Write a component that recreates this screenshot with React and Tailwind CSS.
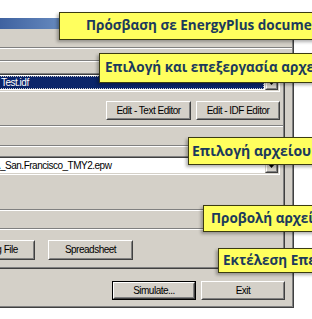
import React from "react";

const ui = "font-['Liberation_Sans',Arial,sans-serif] text-[10px] tracking-[-0.5px] text-black leading-none whitespace-nowrap";

function Btn({ children, className = "", def = false }) {
  const body = (
    <div className="h-full border border-t-white border-l-white border-r-[#404040] border-b-[#404040]">
      <div className={"h-full flex items-center justify-center border border-t-[#d4d0c8] border-l-[#d4d0c8] border-r-[#808080] border-b-[#808080] " + ui}>
        {children}
      </div>
    </div>
  );
  if (def) {
    return <div className={"border border-black " + className}>{body}</div>;
  }
  return <div className={className}>{body}</div>;
}

function Arrow() {
  return (
    <svg width="7" height="4" viewBox="0 0 7 4">
      <path d="M0 0h7L3.5 4z" fill="#000" />
    </svg>
  );
}

function Combo({ children, selected = false, textClass = "" }) {
  return (
    <div className="ml-[-4px] mr-[3px] h-[19px] border border-t-[#808080] border-l-[#808080] border-r-white border-b-white">
      <div className="h-full flex border border-t-[#404040] border-l-[#404040] border-r-[#d4d0c8] border-b-[#d4d0c8] bg-white">
        <div className="flex-1 min-w-0 overflow-hidden p-px">
          {selected ? (
            <div className="h-full flex items-center bg-[#0a246a] border border-dotted border-[#c8c8c8]">
              <span className={ui + " text-white pl-[1px] " + textClass}>{children}</span>
            </div>
          ) : (
            <div className="h-full flex items-center">
              <span className={ui + " " + textClass}>{children}</span>
            </div>
          )}
        </div>
        <div className="w-[13px] h-full border border-t-[#d4d0c8] border-l-[#d4d0c8] border-r-[#404040] border-b-[#404040]">
          <div className="h-full flex items-center justify-center bg-[#d4d0c8] border border-t-white border-l-white border-r-[#808080] border-b-[#808080]">
            <Arrow />
          </div>
        </div>
      </div>
    </div>
  );
}

function Etched({ className = "" }) {
  return (
    <div className={className}>
      <div className="h-px bg-[#808080]" />
      <div className="h-px bg-white" />
    </div>
  );
}

function Callout({ className, children }) {
  return (
    <div
      className={
        "absolute flex items-center bg-[#ffff5e] border border-[#3b3b12] shadow-[-2px_2px_3px_rgba(0,0,0,0.3)] font-['Open_Sans','Noto_Sans',sans-serif] font-bold text-[#1b3a5c] whitespace-nowrap leading-none " +
        className
      }
    >
      {children}
    </div>
  );
}

export default function App() {
  return (
    <div className="relative w-[312px] h-[319px] overflow-hidden bg-white">
      <div className="h-[18px]" />
      {/* window */}
      <div className="w-[294px] h-[290px] border-r border-b border-[#404040]">
        <div className="h-full flex flex-col bg-[#d4d0c8] border-r border-b border-[#808080]">
          {/* title bar */}
          <div className="h-[11px] bg-[linear-gradient(to_right,#3f62a0,#a6caf0_160px)]" />
          {/* menu bar */}
          <div className="h-[18px]" />
          <Etched />
          {/* tab strip */}
          <div className="h-[11px]" />
          {/* tab page */}
          <div className="w-[285px] h-[209px] border-t border-t-[#808080] border-r border-r-[#404040] border-b border-b-[#404040]">
            <div className="h-full flex flex-col border-t border-t-white border-r border-r-[#808080] border-b border-b-[#808080]">
              <div className="mt-[11px]">
                <Combo selected>Test.idf</Combo>
              </div>
              <div className="mt-[9px] h-[19px] flex justify-end gap-[5px] pr-[3px]">
                <Btn className="w-[85px]">Edit - Text Editor</Btn>
                <Btn className="w-[84px]">Edit - IDF Editor</Btn>
              </div>
              <Etched className="mt-[5px]" />
              <Etched className="mt-[18px]" />
              <div className="mt-[9px]">
                <Combo textClass="ml-[-36px]">USA_CA_San.Francisco_TMY2.epw</Combo>
              </div>
              <Etched className="mt-[34px]" />
              <Etched className="mt-[17px]" />
              <div className="mt-[10px] h-[20px] flex gap-[13px]">
                <Btn className="w-[84px] ml-[-49px]">Drawing File</Btn>
                <Btn className="w-[85px]">Spreadsheet</Btn>
              </div>
            </div>
          </div>
          {/* bottom buttons */}
          <div className="mt-[12px] h-[19px] flex justify-end gap-[5px] pr-[7px]">
            <Btn def className="w-[84px]">Simulate...</Btn>
            <Btn className="w-[84px]">Exit</Btn>
          </div>
        </div>
      </div>

      <Callout className="left-[59px] top-[12px] w-[270px] h-[28px] pl-[26px] text-[13.5px]">Πρόσβαση σε EnergyPlus documentation</Callout>
      <Callout className="left-[99px] top-[53px] w-[240px] h-[30px] pl-[5px] text-[13.5px]">Επιλογή και επεξεργασία αρχείου</Callout>
      <Callout className="left-[188px] top-[137px] w-[150px] h-[28px] pl-[3px] text-[14px]">Επιλογή αρχείου καιρού</Callout>
      <Callout className="left-[203px] top-[205px] w-[140px] h-[27px] pl-[7px] text-[13.5px]">Προβολή αρχείων</Callout>
      <Callout className="left-[218px] top-[248px] w-[130px] h-[25px] pl-[4px] text-[13.5px]">Εκτέλεση Επεξεργασίας</Callout>
    </div>
  );
}
